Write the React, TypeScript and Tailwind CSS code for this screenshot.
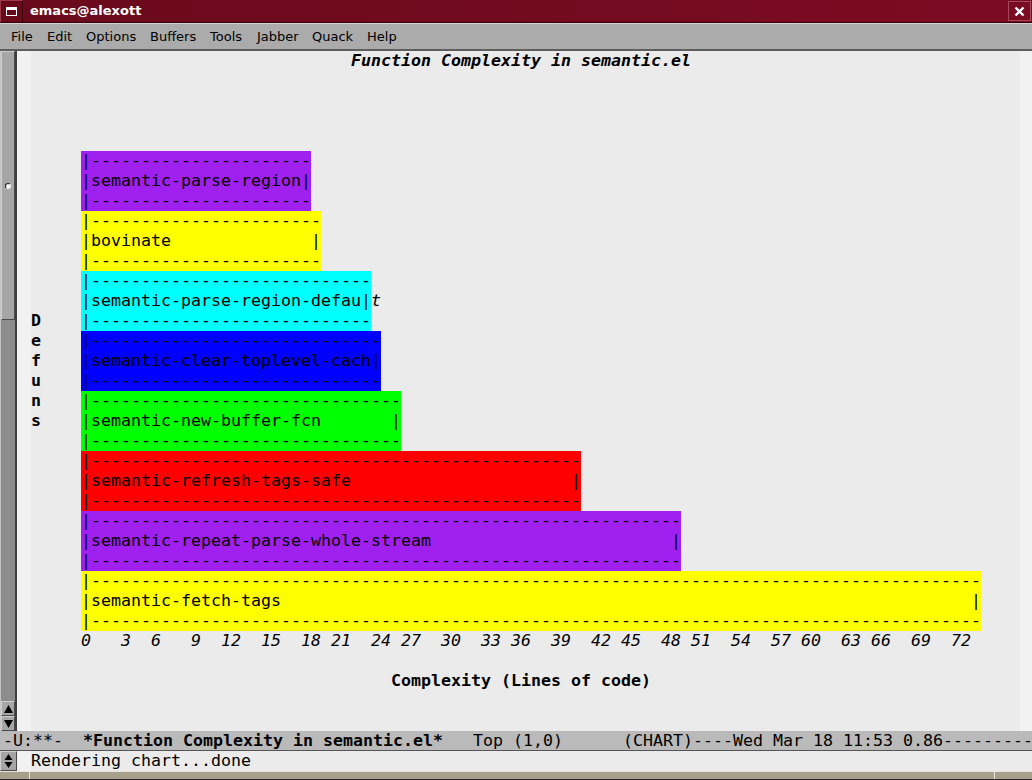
import React from 'react';

const mono = "font-['DejaVu_Sans_Mono',monospace] text-[16.61px] leading-[20px] whitespace-pre";

const bars = [
  { label: 'semantic-parse-region', cols: 23, bg: 'bg-[#a020f0]' },
  { label: 'bovinate', cols: 24, bg: 'bg-[#ffff00]' },
  { label: 'semantic-parse-region-default', cols: 29, bg: 'bg-[#00ffff]' },
  { label: 'semantic-clear-toplevel-cache', cols: 30, bg: 'bg-[#0000ff]' },
  { label: 'semantic-new-buffer-fcn', cols: 32, bg: 'bg-[#00ff00]' },
  { label: 'semantic-refresh-tags-safe', cols: 50, bg: 'bg-[#ff0000]' },
  { label: 'semantic-repeat-parse-whole-stream', cols: 60, bg: 'bg-[#a020f0]' },
  { label: 'semantic-fetch-tags', cols: 90, bg: 'bg-[#ffff00]' },
];

const ticks: [number, number][] = [
  [0, 5], [3, 9], [6, 12], [9, 16], [12, 19], [15, 23], [18, 27], [21, 30], [24, 34],
  [27, 37], [30, 41], [33, 45], [36, 48], [39, 52], [42, 56], [45, 59], [48, 63],
  [51, 66], [54, 70], [57, 74], [60, 77], [63, 81], [66, 84], [69, 88], [72, 92],
];

function axisLine() {
  const chars = Array(96).fill(' ');
  ticks.forEach(([v, c]) => {
    String(v).split('').forEach((ch, i) => (chars[c + i] = ch));
  });
  return chars.join('');
}

const menus = [
  { name: 'File', w: 'w-[36px]' },
  { name: 'Edit', w: 'w-[39px]' },
  { name: 'Options', w: 'w-[64px]' },
  { name: 'Buffers', w: 'w-[60px]' },
  { name: 'Tools', w: 'w-[47px]' },
  { name: 'Jabber', w: 'w-[55px]' },
  { name: 'Quack', w: 'w-[55px]' },
  { name: 'Help', w: 'w-[50px]' },
];

function Gutter({ row }: { row: number }) {
  const word = 'Defuns';
  const ch = row >= 13 && row < 19 ? word[row - 13] : '';
  return <span className="w-[50px] shrink-0 font-bold">{ch}</span>;
}

function Bar({ index }: { index: number }) {
  const b = bars[index];
  const inner = b.cols - 2;
  const shown = b.label.length > inner ? b.label.slice(0, inner) : b.label.padEnd(inner, ' ');
  const overflow = b.label.length > inner ? b.label.slice(inner + 1) : '';
  const dashes = '|' + '-'.repeat(b.cols - 1);
  const first = 5 + index * 3;
  const lines = [dashes, '|' + shown + '|', dashes];
  return (
    <>
      {lines.map((line, i) => (
        <div key={i} className="flex h-[20px]">
          <Gutter row={first + i} />
          <span className={`${b.bg} text-black`} style={{ width: b.cols * 10 }}>
            {line}
          </span>
          {i === 1 && overflow && <span className="italic">{overflow}</span>}
        </div>
      ))}
    </>
  );
}

export default function App() {
  return (
    <div className="w-[1032px] h-[780px] overflow-hidden bg-[#ebebeb] flex flex-col select-none">
      {/* title bar */}
      <div className="h-[23px] flex items-stretch bg-gradient-to-r from-[#690a1b] to-[#7c0b22] border-b border-[#3a0008]">
        <div className="w-[23px] flex items-center justify-center border-r border-[#3a0008] border-t border-l border-t-[#9c3a4c] border-l-[#9c3a4c]">
          <div className="w-[11px] h-[9px] border border-white border-t-[3px]" />
        </div>
        <div className="flex-1 pl-[7px] flex items-center font-['DejaVu_Sans',sans-serif] font-bold text-[13px] text-white">
          emacs@alexott
        </div>
        <div className="w-[23px] my-[1px] mr-[1px] flex items-center justify-center border border-[#a04a5a]">
          <svg width="11" height="11" viewBox="0 0 11 11">
            <path d="M1.5 1.5L9.5 9.5M9.5 1.5L1.5 9.5" stroke="white" strokeWidth="2.4" />
          </svg>
        </div>
      </div>

      {/* menu bar */}
      <div className="h-[28px] flex items-center bg-[#ababab] border-t border-[#d4d4d4] border-b-2 border-b-[#5e5e5e] pl-[11px] font-['DejaVu_Sans',sans-serif] text-[13px] text-black">
        {menus.map((m) => (
          <span key={m.name} className={m.w}>
            {m.name}
          </span>
        ))}
      </div>

      {/* buffer window */}
      <div className="h-[680px] flex">
        <div className="w-[17px] flex flex-col bg-[#8d8d8d] border-l border-[#c4c4c4] border-r-2 border-r-[#3e3e3e]">
          <div className="h-[269px] bg-[#a6a6a6] border border-[#4a4a4a] border-l-[#d0d0d0] border-t-[#d0d0d0] flex flex-col items-center">
            <div className="mt-[131px] w-[6px] h-[6px] rounded-full bg-white border border-[#222] border-b-[#eee] border-r-[#eee]" />
          </div>
          <div className="flex-1" />
          <div className="h-[15px] bg-[#a6a6a6] border border-[#4a4a4a] border-l-[#d0d0d0] border-t-[#d0d0d0] flex items-center justify-center">
            <svg width="9" height="8" viewBox="0 0 9 8"><path d="M4.5 0L9 8H0Z" fill="black" /></svg>
          </div>
          <div className="h-[15px] bg-[#a6a6a6] border border-[#4a4a4a] border-l-[#d0d0d0] border-t-[#d0d0d0] flex items-center justify-center">
            <svg width="9" height="8" viewBox="0 0 9 8"><path d="M0 0H9L4.5 8Z" fill="black" /></svg>
          </div>
        </div>
        <div className="w-[14px] bg-[#f2f2f2]" />
        <div className={`flex-1 flex flex-col text-black ${mono}`}>
          <div className="h-[20px] pl-[320px] font-bold italic">Function Complexity in semantic.el</div>
          {[1, 2, 3, 4].map((r) => (
            <div key={r} className="h-[20px]" />
          ))}
          {bars.map((_, i) => (
            <Bar key={i} index={i} />
          ))}
          <div className="h-[20px] italic">{axisLine()}</div>
          <div className="h-[20px]" />
          <div className="h-[20px] pl-[360px] font-bold">Complexity (Lines of code)</div>
        </div>
        <div className="w-[12px] bg-[#f2f2f2]" />
      </div>

      {/* mode line */}
      <div className={`h-[20px] bg-[#bababa] border-b border-[#555] pl-[3px] overflow-hidden text-black ${mono} leading-[19px]`}>
        -U:**-{'  '}
        <span className="font-bold">*Function Complexity in semantic.el*</span>
        {'   Top (1,0)      (CHART)----Wed Mar 18 11:53 0.86' + '-'.repeat(60)}
      </div>

      {/* minibuffer */}
      <div className="h-[20px] flex">
        <div className="w-[17px] bg-[#a6a6a6] border border-[#4a4a4a] border-l-[#d0d0d0] border-t-[#d0d0d0] flex items-center justify-center">
          <svg width="9" height="16" viewBox="0 0 9 16">
            <path d="M4.5 1L8.5 7H0.5Z M0.5 9H8.5L4.5 15Z" fill="black" />
          </svg>
        </div>
        <div className="w-[14px] bg-[#f2f2f2]" />
        <div className={`flex-1 text-black ${mono}`}>Rendering chart...done</div>
      </div>

      {/* bottom frame */}
      <div className="flex-1 flex bg-[#a89f8c] border-t border-[#e8e4dc] border-b border-b-[#2a2a2a]">
        <div className="w-[30px] border-r border-[#e8e4dc]" />
        <div className="flex-1" />
        <div className="w-[38px] border-l border-[#e8e4dc]" />
      </div>
    </div>
  );
}
